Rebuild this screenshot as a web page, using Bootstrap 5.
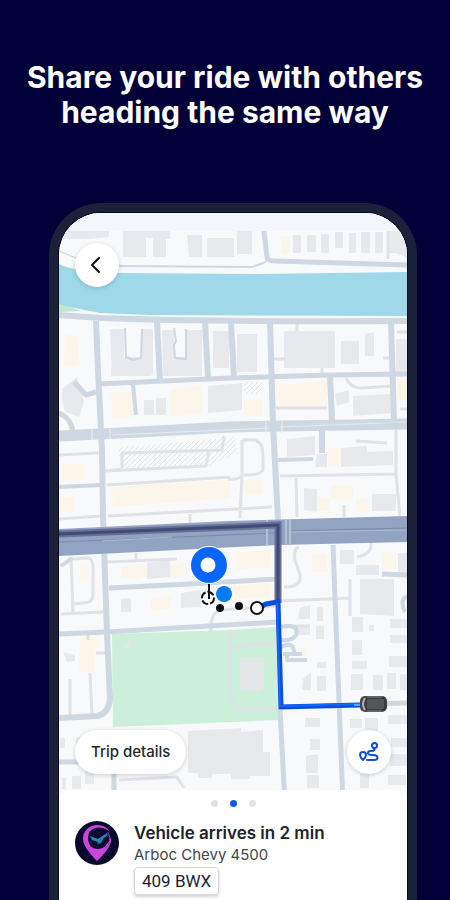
<!DOCTYPE html>
<html lang="en">
<head>
<meta charset="utf-8">
<meta name="viewport" content="width=device-width, initial-scale=1">
<title>Shared ride</title>
<link rel="stylesheet" href="https://cdn.jsdelivr.net/npm/bootstrap@5.3.0/dist/css/bootstrap.min.css">
<style>
body{background:#020038;font-family:Inter,"Liberation Sans",sans-serif;color:#20232b}
.headline{font-size:30px;line-height:35px;font-weight:700;padding-top:60px;padding-bottom:73px}
.phone{margin:0 33px 0 49px;border:10px solid #1b2138;border-bottom:0;border-radius:52px 52px 0 0;background:#1b2138}
.phone-screen{border-radius:42px 42px 0 0;background:#fff;box-shadow:0 0 0 1px #080a22}
.floating{background:#fff;border:0;box-shadow:0 1px 4px rgba(40,50,70,.22)}
.round-btn{width:44px;height:44px}
.back-btn{top:30px;left:16px}
.map-actions{left:16px;right:16px;bottom:29px}
.trip-btn{height:44px;padding:0 16px;font-size:15px;font-weight:500;color:#25272c}
.trip-sheet{margin-top:-13px;border-radius:12px 12px 0 0;padding:10px 16px 16px}
.pager{gap:12px}
.pager-dot{width:7px;height:7px;background:#e1e2ea}
.pager-dot.current{background:#0a57ee}
.ride-row{gap:15px;margin-top:14px}
.ride-title{font-size:17px;line-height:24px;font-weight:600;margin:0}
.ride-model{font-size:15px;line-height:20px;color:#44464c;margin:0}
.plate{font-family:Roboto,sans-serif;font-size:17px;line-height:26px;border:1px solid #d5d6e2;border-radius:4px;padding:0 7px;margin-top:2px;box-shadow:0 2px 3px rgba(40,45,70,.2)}
</style>
<script src="https://cdn.jsdelivr.net/npm/bootstrap@5.3.0/dist/js/bootstrap.bundle.min.js"></script>
</head>
<body>
<main class="d-flex flex-column vh-100 overflow-hidden">
<h1 class="headline text-white text-center mb-0">Share your ride with others<br>heading the same way</h1>
<section class="phone flex-grow-1">
<div class="phone-screen overflow-hidden h-100">
<div class="position-relative">
<svg class="d-block w-100" viewBox="59 213 348 590" role="img" aria-label="Route map">
<rect x="59" y="213" width="348" height="590" fill="#f8f9fa"/>
<rect x="59" y="213" width="348" height="18" fill="#f4f6fb"/>
<!-- water -->
<path d="M59 264Q74 272 120 273L260 274L407 272V316L150 315L100 313L59 305Z" fill="#9fd8e8"/>
<path d="M59 304L82 311L59 312Z" fill="#bfe8ce"/>
<path d="M59 251L76 258" stroke="#bcdccf" stroke-width="1"/>
<!-- tinted lots -->
<g fill="#fbf6e9">
<path d="M281 236h8v17h-8zM66 334l13 3v28l-16 3zM111 393l22-2v26l-20 2zM170 390l32-5v27l-31 5zM279 385l48-4v26l-48 3zM62 464h22v16H62zM112 487L230 480v18L113 507ZM60 497h15v15H60zM121 567l26-2v12l-26 2zM170 564l18-2v14l-18 2zM236 552l35-2v17l-35 3zM151 598l20-2v13l-20 2zM230 586l40-3v14l-40 2zM312 555h15v17h-15zM382 552h14v18h-14zM80 565h9v14h-9zM79 645h16v28l-16-2zM80 633h20v16H80zM331 486h22v13h-22zM318 498h12v13h-12zM356 499h12v13h-12zM328 448h12v18h-12zM244 400h19v16h-19zM245 480h17v14h-17zM298 648h8v8h-8zM397 378h10v22h-10z"/>
</g>
<!-- buildings -->
<g fill="#e7e9ec">
<path d="M59 231h50v6l-18 2H59zM123 231h47v8h-4v18h-13v-19h-7v19h-23zM187 235h15v22h-13zM207 238h27v19h-27zM237 231h15v23h-15zM293 235h8v18h-8zM307 235h9v17h-9zM321 234h8v19h-8zM335 232h8v16h-8zM349 233h7v20h-7zM361 232h9v21h-9zM375 232h8v21h-8zM388 231h19v27l-10-5h-9z"/>
<path d="M110 329h14v28h17v-28h12v46h-41zM162 330h12v27h13v-27h15v46h-39zM213 331h16v37h-16zM237 334h20v38h-20zM284 331h51v37h-51zM341 341h18v23h-18zM365 334l9-2v24h-9zM396 339h11v33h-11zM111 369h40v7h-40z"/>
<path d="M62 389l15-12 7 25-5 15-14-5-3-12zM144 400h10v15h-10zM156 398h10v17h-10zM208 386l34-3v27l-34 3zM353 396l38-2v19l-38 3zM335 394l14-4v12l-12 4zM287 439l28-3v19l-28 2zM341 448l26-2v6l26-1v14l-52 2zM317 454h10v13h-12zM304 488l13 1v23l-13-2zM372 494h24v17h-24z"/>
<path d="M147 563l23-3v17l-23 2zM121 599l10-1v14h-10zM181 593l20-3v17l-20 1zM340 550h14v14h-14zM356 565h23v10h-23zM360 579h34v37l-34-2zM300 608l10-3v14h-12zM317 607h6v14h-6zM398 553h9v21h-9zM352 617h11v15h-11zM390 619h17v9h-17zM390 635h17v8h-17zM369 625h5v6h-5zM296 626l14-2v11h-14zM316 626h8v13h-8zM63 652l12 3v6l-8 1z"/>
<path d="M352 640h10v15h-10zM352 661h15v8h-15zM351 674h12v16h-12zM373 675h10v15h-10zM387 673h9v16h-9zM400 674h7v16h-7zM389 656h18v11h-18zM317 662h9v6h-9zM303 679l8-7v18h-9zM317 676h9v15h-9zM305 718h15v9h-15zM310 739h10v11h-10zM306 756l12-2v19h-12zM307 775h12v13h-12zM350 719h12v9h-12zM365 718h13v13h-13zM388 715h19v9h-19zM391 738h16v9h-16zM390 754h17v12h-17zM360 774h9v14h-9zM388 775h18v10h-18z"/>
<path d="M188 731l53-3v4l22-2v22h7v24h-20v3h-19v-5h-19v4h-14v-5h-10zM76 738l12-4v14H76zM60 738h5v10h-5zM72 776h9v13h-9zM85 768h9v16h-9zM62 778h4v11h-4z"/>
</g>
<!-- park -->
<path d="M112 634L230 630L278 627L279 720L113 727Z" fill="#cbefd8"/>
<g fill="none" stroke="#dbe3e4" stroke-width="4"><path d="M230 632V693Q231 708 244 709H279M232 646L277 643"/></g>
<path d="M240 658h24v31l-10 3-14-3z" fill="#e3e7e8"/><path d="M123 645l8-5-2 7-5 2z" fill="#e4e6e8"/>
<!-- parking hatching -->
<defs><pattern id="hatch" width="5" height="5" patternUnits="userSpaceOnUse"><path d="M0 5L5 0" stroke="#e2e4e8" stroke-width="1"/></pattern></defs>
<path d="M118 448L235 437L238 453L208 466L122 471Z M244 382h18v12h-18z" fill="url(#hatch)"/>
<!-- lanes -->
<g fill="none" stroke="#dfe2e7" stroke-width="3" stroke-linejoin="round">
<path d="M122 468V453L222 450L224 436M122 469L105 471L206 466L209 452M59 455L99 453M107 485L230 477M59 519L101 516M108 516L272 507M190 514V523M242 440V475Q240 480 228 479M243 440H255Q263 443 263 454V470Q261 475 244 475M242 475L240 518M276 408H327M280 476L396 474M296 478L297 517M344 505V517M396 430V474L400 517M387 443L356 441M346 378Q350 388 362 388L391 386M400 409H407"/>
<path d="M71 557L73 612M61 614L103 612M71 559L89 558Q94 561 93 572V594Q93 603 83 603L73 604M107 562L177 559M136 553V561M299 547Q293 549 295 560L300 575Q302 587 284 587M279 601L350 598M350 579V616M211 631Q210 614 220 610L277 606M280 626H310M371 543Q372 554 357 557M88 631V640M96 653H109M70 679V715M90 673L92 715M119 780L177 777L184 788M274 359H285M383 358H392M322 368V375M297 324V331M388 231V259M397 332H407"/>
</g>
<g stroke="#cdd8e3" fill="none" stroke-linejoin="round">
<path d="M118 266L252 267L266 262" stroke-width="2"/>
<path d="M264 231L267 257Q267 261 275 261L407 265" stroke-width="5"/>
<path d="M59 315L101 318Q200 322 407 321" stroke-width="6"/>
<path d="M96 321L98 370L102 450L103 517L107 633L110 699Q109 713 98 716L59 718" stroke-width="6"/>
<path d="M157 322L160 381M205 322L208 378M231 322L234 378M270 322L273 425L278 520M391 322L394 421M330 375L332 421M322 431V453" stroke-width="6"/>
<path d="M98 384L230 378L330 375L407 374" stroke-width="5"/>
<path d="M133 384L134 395L136 415" stroke-width="4"/>
<path d="M74 382L86 395L96 392M59 413Q71 418 73 432" stroke-width="5"/>
<path d="M125 328L126 357L133 360L141 358L142 329M174 328L176 341L174 345L175 358L186 359V329" stroke-width="2"/>
<path d="M59 436L120 433L230 427L407 424" stroke-width="11"/>
<path d="M278 460L313 459M59 487L101 485" stroke-width="4"/>
<path d="M109 588L190 584L278 579M59 634L106 632L278 622M382 574L407 575" stroke-width="5"/>
<path d="M333 545L337 650L343 803M280 710L285 803M59 762H80M114 772V803M364 704L407 703" stroke-width="5"/>
<path d="M282 627Q299 623 296 635Q293 641 281 640M283 654H302M287 654V660H307M281 647Q295 640 294 655M61 566L72 558" stroke-width="4"/>
<path d="M407 596Q399 600 405 612" stroke-width="4"/>
</g>
<g stroke="#e4ecf1" stroke-width="1"><path d="M112 435L270 428M280 427L407 422"/></g>
<path d="M310 424L399 422" stroke="#c7e3dc" stroke-width="1"/>
<path d="M92 429V441M110 429V439M266 421V434M282 421V433" stroke="#edf1f5" stroke-width="1"/>
<!-- highway -->
<path d="M59 529L230 521L407 516V542L278 545L59 556Z" fill="#93a4c2"/>
<path d="M59 542L275 533M288 531L407 528" stroke="#788cb0" stroke-width="1"/>
<path d="M102 541L172 537M288 532L407 530" stroke="#acbad0" stroke-width="1"/>
<path d="M267 520V545M286 519V544M290 519V544" stroke="#b5c1d4" stroke-width="2"/>
<!-- route -->
<path d="M59 534L278 525V603" fill="none" stroke="#667199" stroke-width="7"/>
<path d="M59 534L278 525V603" fill="none" stroke="#434a76" stroke-width="3"/>
<path d="M260 607L266 604L278 602L281 707L360 705" fill="none" stroke="#0750db" stroke-width="5"/>
<path d="M277 603L280 706L360 704" fill="none" stroke="#1466ff" stroke-width="2"/>
<path d="M354 705H364" stroke="#48a9ff" stroke-width="2"/>
<!-- stops and location -->
<circle cx="220" cy="608" r="4" fill="#111"/><circle cx="239" cy="606" r="4" fill="#111"/>
<circle cx="257" cy="608" r="6" fill="#fff" stroke="#111" stroke-width="2"/>
<circle cx="208" cy="598" r="6" fill="#fff" stroke="#111" stroke-width="2" stroke-dasharray="7 2"/>
<path d="M209 582V599" stroke="#111" stroke-width="2"/>
<circle cx="209" cy="565" r="19" fill="#fff"/><circle cx="209" cy="565" r="18" fill="#0766fb"/><circle cx="208" cy="565" r="7.500" fill="#fff"/>
<circle cx="224" cy="594" r="10" fill="#fff"/><circle cx="224" cy="594" r="8" fill="#0a7bf7"/>
<!-- vehicle -->
<rect x="360" y="696" width="27" height="16" rx="5" fill="#444547"/><rect x="366" y="698" width="19" height="12" rx="3" fill="#55565a" stroke="#292a2c"/>
<path d="M365 698Q361 704 365 710" fill="none" stroke="#aeb2b5" stroke-width="2"/><path d="M367 697H382M367 711H382" stroke="#858789" stroke-width="1"/>
</svg>
<button type="button" aria-label="Back" class="back-btn round-btn floating position-absolute rounded-circle d-flex align-items-center justify-content-center p-0">
<svg width="20" height="20" viewBox="0 0 20 20" fill="none" stroke="#111" stroke-width="2" stroke-linecap="round" stroke-linejoin="round"><path d="M12 3L5 10L12 17"/></svg>
</button>
<div class="map-actions position-absolute d-flex align-items-center justify-content-between">
<button type="button" class="trip-btn floating rounded-pill">Trip details</button>
<button type="button" aria-label="Show route" class="round-btn floating rounded-circle d-flex align-items-center justify-content-center p-0">
<svg width="20" height="20" viewBox="0 0 20 20" fill="none" stroke="#164ada" stroke-width="2" stroke-linecap="round" stroke-linejoin="round"><circle cx="15.500" cy="3.500" r="2.500"/><path d="M15.500 6V7.500Q15.500 9 12 9Q8.500 9 9 11.500Q9.500 13 14 13Q18.500 13 18.500 15.500Q18.500 18 15 18H8M4 18Q1 15 1 13A3 3 0 0 1 7 13Q7 15 4 18Z"/></svg>
</button>
</div>
</div>
<div class="trip-sheet bg-white position-relative">
<div class="pager d-flex justify-content-center" aria-hidden="true"><span class="pager-dot rounded-circle"></span><span class="pager-dot current rounded-circle"></span><span class="pager-dot rounded-circle"></span></div>
<div class="ride-row d-flex align-items-start">
<svg class="flex-shrink-0" width="44" height="44" viewBox="0 0 44 44" aria-hidden="true"><circle cx="22" cy="22" r="22" fill="#08082e"/><path d="M22 40Q8 26 8 18A14 14 0 0 1 22 4Q31 4 35 11Q28 5 20 7Q13 9 13 17Q13 27 22 28Q31 29 36 16Q38 25 22 40Z" fill="#cb45dc"/><path d="M33 11Q38 22 29 28" fill="none" stroke="#9b39c6" stroke-width="1"/><path d="M15 15L23 18L32 12L33 14L28 18L26 22L22 23L23 21L17 19Z" fill="#2883bd"/></svg>
<div>
<h2 class="ride-title">Vehicle arrives in 2 min</h2>
<p class="ride-model">Arboc Chevy 4500</p>
<span class="plate d-inline-block">409 BWX</span>
</div>
</div>
</div>
</div>
</section>
</main>
</body>
</html>
